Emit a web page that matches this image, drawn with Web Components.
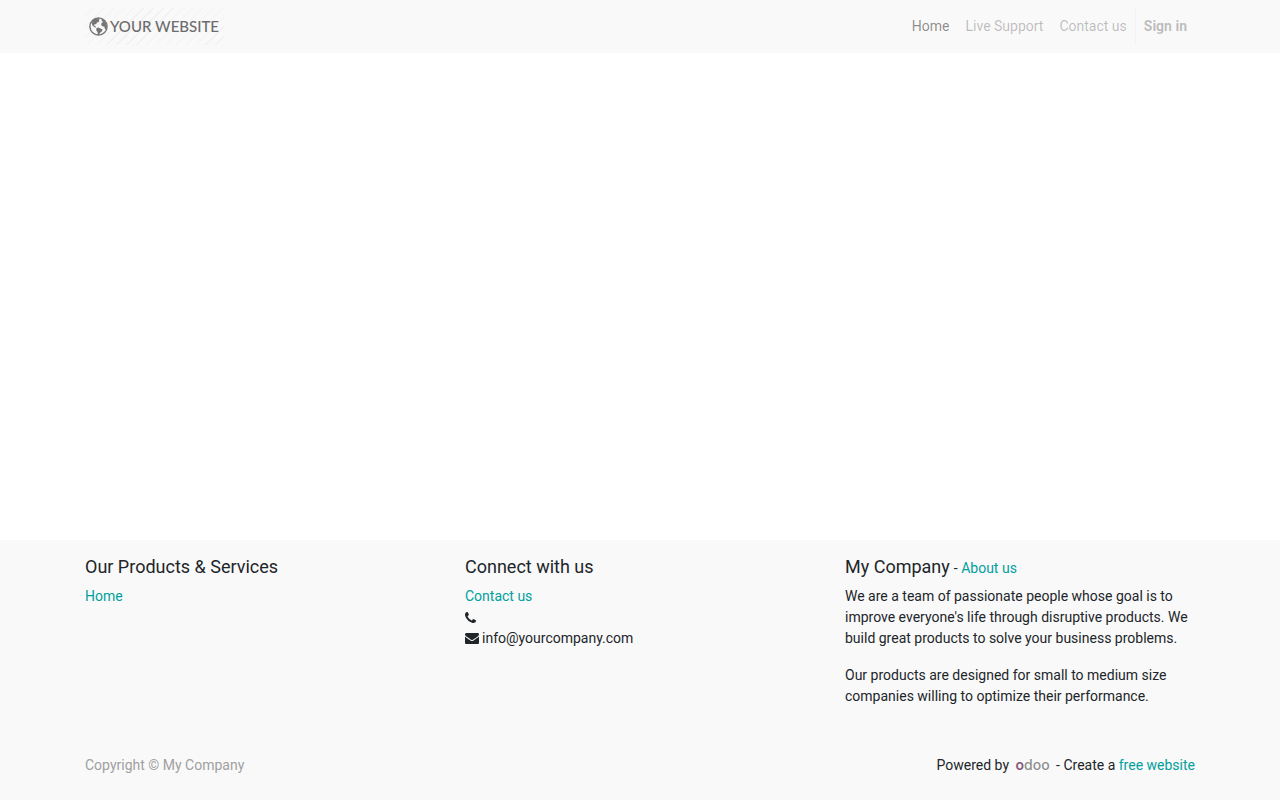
<!DOCTYPE html>
<html lang="en">
<head>
<meta charset="utf-8">
<meta name="viewport" content="width=device-width, initial-scale=1">
<title>Home | My Website</title>
<style>
body { margin: 0; background: #fff; color: #212529; font: 14px/21px Roboto, "Noto Sans", sans-serif; --link: #00a09d; --bar: #f9f9f9; }
</style>
</head>
<body>
<site-page>
  <site-header slot="header">
    <site-logo slot="brand"></site-logo>
    <nav-item href="#home" active>Home</nav-item>
    <nav-item href="#support">Live Support</nav-item>
    <nav-item href="#contact">Contact us</nav-item>
    <nav-item href="#login" divided>Sign in</nav-item>
  </site-header>
  <site-footer slot="footer">
    <footer-column heading="Our Products &amp; Services"><text-link href="#home">Home</text-link></footer-column>
    <footer-column heading="Connect with us">
      <text-link href="#contact">Contact us</text-link>
      <contact-line icon="phone"></contact-line>
      <contact-line icon="envelope">info@yourcompany.com</contact-line>
    </footer-column>
    <footer-column heading="My Company">
      <span slot="aside"> - <text-link href="#about">About us</text-link></span>
      <company-text>
        <span slot="first">We are a team of passionate people whose goal is to improve everyone's life through disruptive products. We build great products to solve your business problems.</span>
        <span slot="second">Our products are designed for small to medium size companies willing to optimize their performance.</span>
      </company-text>
    </footer-column>
    <span slot="copyright">Copyright © My Company</span>
    <powered-by slot="credits"></powered-by>
  </site-footer>
</site-page>

<script>
const define = (name, markup, setup) => {
  const template = document.createElement('template');
  template.innerHTML = markup;
  customElements.define(name, class extends HTMLElement {
    constructor() {
      super();
      this.attachShadow({ mode: 'open' }).append(template.content.cloneNode(true));
    }
    connectedCallback() { if (setup) setup(this, this.shadowRoot); }
  });
};

define('site-page', `
<style>
:host { display: flex; flex-direction: column; min-height: 100vh; }
main { flex: 1; }
</style>
<slot name="header"></slot><main><slot></slot></main><slot name="footer"></slot>`);

define('site-header', `
<style>
:host { display: block; background: var(--bar); }
header { box-sizing: border-box; max-width: 1140px; margin: 0 auto; padding: 8px 15px; display: flex; flex-wrap: wrap; justify-content: space-between; align-items: center; }
nav { display: flex; flex-wrap: wrap; }
</style>
<header><slot name="brand"></slot><nav aria-label="Main"><slot></slot></nav></header>`);

define('nav-item', `
<style>
:host { display: block; }
a { display: block; padding: 8px; color: rgba(0, 0, 0, .25); text-decoration: none; }
:host([active]) a { color: rgba(0, 0, 0, .45); }
:host([divided]) { border-left: 1px solid #f3f3f3; }
:host([divided]) a { font-weight: 700; }
a:hover { color: rgba(0, 0, 0, .5); }
</style>
<a><slot></slot></a>`, (el, root) => { root.querySelector('a').href = el.getAttribute('href'); });

define('site-logo', `
<style>
:host { display: block; }
a { display: flex; align-items: center; gap: 2px; box-sizing: border-box; width: 139px; height: 37px; padding-left: 4px; color: #6c6c6c; text-decoration: none; white-space: nowrap; font: 500 15px/37px Lato, sans-serif;
  background: repeating-linear-gradient(135deg, #f9f9f9 0 6px, #f1f1f1 6px 7px); }
svg { flex: none; }
</style>
<a href="#home">
<svg width="19" height="19" viewBox="0 0 19 19" aria-hidden="true">
<circle cx="9.5" cy="9.5" r="8.6" fill="none" stroke="#757575" stroke-width="1.4"/>
<path fill="#757575" d="M4 3.2 6.4 1.4 9.8 1 10.8 2.2 9.5 3 10.6 4 9.2 5.2 8 5.5 7.2 7.2 5.5 7.3 5 8.5 6.6 9.3 7 10.5 5.8 10.3 3.6 8.8 2.7 6.2zM7.5 11 9.2 10.4 11.6 11.4 13.6 12.5 12.8 14.6 11.1 15.7 10 18 8.7 17.8 8.6 15.2 7.2 13.3zM12.1 2 14.4 2.8 16.8 5.7 17.9 9.5 17 12.8 15.8 11.8 15.5 9.7 13.3 9.3 12.1 7.7 12.6 5.8 14.1 5.2 12.9 3.8z"/>
</svg><span>YOUR WEBSITE</span></a>`);

define('text-link', `
<style>
:host { display: inline; }
a { color: var(--link); text-decoration: none; }
a:hover { text-decoration: underline; }
</style>
<a><slot></slot></a>`, (el, root) => { root.querySelector('a').href = el.getAttribute('href'); });

define('site-footer', `
<style>
:host { display: block; background: var(--bar); }
footer { box-sizing: border-box; max-width: 1140px; margin: 0 auto; padding: 16px 15px 24px; }
.columns { display: grid; grid-template-columns: repeat(3, minmax(0, 1fr)); gap: 30px; }
.bottom { display: flex; flex-wrap: wrap; justify-content: space-between; margin-top: 48px; }
.copyright { color: #a0a0a0; }
@media (max-width: 700px) { .columns { grid-template-columns: minmax(0, 1fr); } }
</style>
<footer><div class="columns"><slot></slot></div>
<div class="bottom"><div class="copyright"><slot name="copyright"></slot></div><slot name="credits"></slot></div></footer>`);

define('footer-column', `
<style>
:host { display: block; }
.head { display: flex; flex-wrap: wrap; align-items: baseline; gap: 4px; min-height: 22px; margin-bottom: 8px; }
h2 { margin: 0; font-size: 18px; line-height: 21px; font-weight: 400; }
.aside { line-height: 20px; }
</style>
<div class="head"><h2></h2><div class="aside"><slot name="aside"></slot></div></div>
<slot></slot>`, (el, root) => { root.querySelector('h2').textContent = el.getAttribute('heading'); });

define('contact-line', `
<style>
:host { display: block; height: 21px; }
div { display: flex; align-items: center; gap: 3px; height: 21px; }
svg { display: none; fill: currentColor; }
:host([icon=phone]) .phone, :host([icon=envelope]) .envelope { display: block; }
</style>
<div>
<svg class="phone" width="11" height="11" viewBox="0 128 1408 1408" aria-hidden="true"><path d="M1408 1240q0 27-10 70.5t-21 68.5q-21 50-122 106-94 51-186 51-27 0-53-3.5t-57.5-12.5-47-14.5-55.5-20.5-49-18q-98-35-175-83-127-79-264-216t-216-264q-48-77-83-175-3-9-18-49t-20.5-55.5-14.5-47-12.5-57.5-3.5-53q0-92 51-186 56-101 106-122 25-11 68.5-21t70.5-10q14 0 21 3 18 6 53 76 11 19 30 54t35 63.5 31 53.5q3 4 17.5 25t21.5 35.5 7 28.5q0 20-28.5 50t-62 55-62 53-28.5 46q0 9 5 22.5t8.5 20.5 14 24 11.5 19q76 137 174 235t235 174q2 1 19 11.5t24 14 20.5 8.5 22.5 5q18 0 46-28.5t53-62 55-62 50-28.5q14 0 28.5 7t35.5 21.5 25 17.5q25 15 53.5 31t63.5 35 54 30q70 35 76 53 3 7 3 21z"/></svg>
<svg class="envelope" width="14" height="11" viewBox="0 256 1792 1408" aria-hidden="true"><path d="M1792 710v794q0 66-47 113t-113 47h-1472q-66 0-113-47t-47-113v-794q44 49 101 87 362 246 497 345 57 42 92.5 65.5t94.5 48 110 24.5h2q51 0 110-24.5t94.5-48 92.5-65.5q170-123 498-345 57-39 100-87zm0-294q0 79-49 151t-122 123q-376 261-468 325-10 7-42.5 31t-54 38.5-52 32.5-57.5 27-50 9h-2q-23 0-50-9t-57.5-27-52-32.5-54-38.5-42.5-31q-91-64-262-182.5t-205-142.5q-62-42-117-115.5t-55-136.5q0-78 41.5-130t118.5-52h1472q65 0 112.5 47t47.5 113z"/></svg>
<slot></slot></div>`);

define('company-text', `
<style>
:host { display: block; }
p { margin: 0 0 16px; }
p + p { margin-bottom: 0; }
</style>
<p><slot name="first"></slot></p><p><slot name="second"></slot></p>`);

define('powered-by', `
<style>
:host { display: block; }
.logo { display: inline-block; padding: 0 3px; line-height: 16px; text-align: center; text-decoration: none; color: #8f8f8f; font-family: Inter, sans-serif; font-weight: 500; }
.logo b { color: #875a7b; font-weight: 600; }
</style>
Powered by <a class="logo" href="#odoo"><b>o</b>doo</a> - Create a <text-link href="#website">free website</text-link>`);
</script>
</body>
</html>
